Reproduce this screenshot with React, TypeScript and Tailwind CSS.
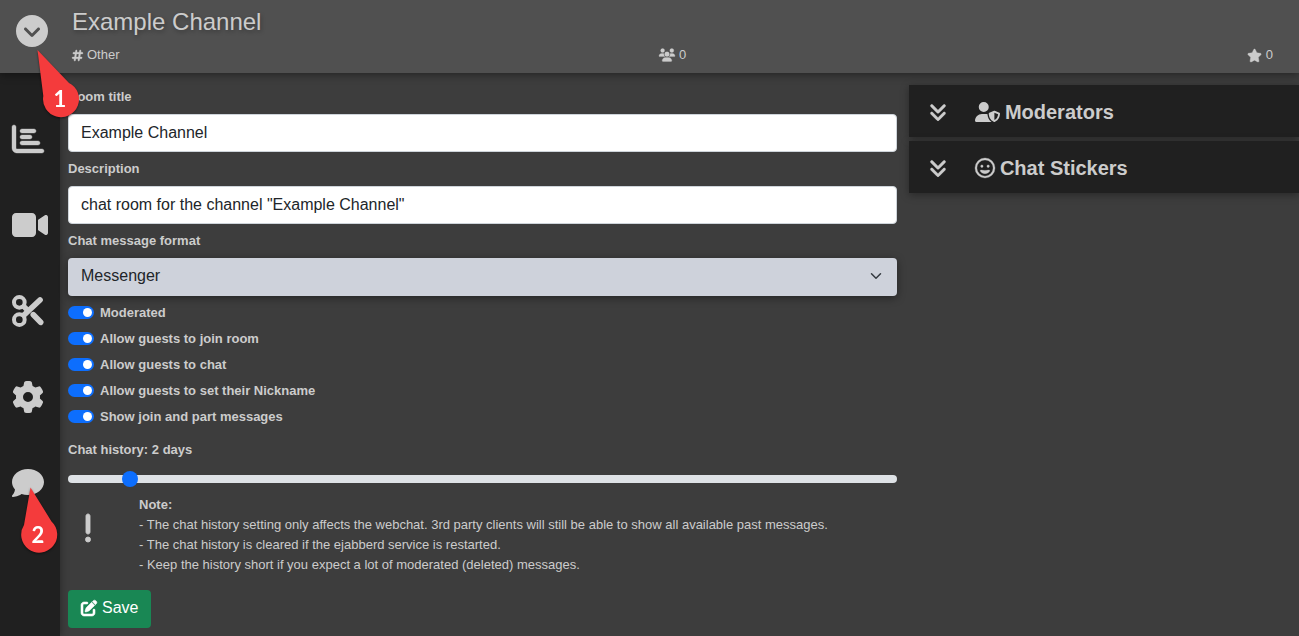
import { useState } from "react";
import type { ReactNode } from "react";
import {
  FaAnglesDown,
  FaChartBar,
  FaCircleChevronDown,
  FaComment,
  FaExclamation,
  FaGear,
  FaHashtag,
  FaPenToSquare,
  FaRegFaceGrin,
  FaStar,
  FaUserShield,
  FaUsers,
  FaVideo,
} from "react-icons/fa6";

function Scissors() {
  return (
    <svg viewBox="0 0 96 96" className="h-8 w-8" fill="none" stroke="currentColor" strokeLinecap="round">
      <circle cx="22" cy="22" r="16" strokeWidth="12" />
      <circle cx="22" cy="74" r="16" strokeWidth="12" />
      <path d="M36 60 84 15" strokeWidth="17" />
      <path d="M36 35 46 45" strokeWidth="16" />
      <path d="M64 59 86 82" strokeWidth="17" />
    </svg>
  );
}

const NAV = [
  { label: "Statistics", icon: <FaChartBar className="h-8 w-8 overflow-visible" strokeWidth={6} /> },
  { label: "Video", icon: <FaVideo className="h-8 w-9" /> },
  { label: "Clips", icon: <Scissors /> },
  { label: "Settings", icon: <FaGear className="h-8 w-8" /> },
  { label: "Chat", icon: <FaComment className="h-8 w-8" /> },
];

const OPTIONS = [
  "Moderated",
  "Allow guests to join room",
  "Allow guests to chat",
  "Allow guests to set their Nickname",
  "Show join and part messages",
];

function Marker({ n, path, x, y }: { n: number; path: string; x: number; y: number }) {
  return (
    <g>
      <path d={path} fill="#f43b3c" />
      <text
        x={x}
        y={y}
        textAnchor="middle"
        fill="#fff"
        fontSize="22"
        fontWeight="700"
        fontFamily="Lato, 'Open Sans', sans-serif"
      >
        {n}
      </text>
    </g>
  );
}

function Field({ id, label, children }: { id: string; label: string; children: ReactNode }) {
  return (
    <div className="flex flex-col gap-[7px]">
      <label htmlFor={id} className="text-[13px] leading-5 font-bold">
        {label}
      </label>
      {children}
    </div>
  );
}

function Toggle({ label }: { label: string }) {
  return (
    <label className="flex h-[26px] items-center gap-1.5 text-[13px] leading-5 font-bold">
      <input type="checkbox" defaultChecked className="peer sr-only" />
      <span className="flex h-[13px] w-[26px] items-center rounded-full bg-gray-400 px-0.5 peer-checked:justify-end peer-checked:bg-[#0d6efd]">
        <span className="h-[9px] w-[9px] rounded-full bg-white" />
      </span>
      <span className="pt-0.5">{label}</span>
    </label>
  );
}

function Panel({ icon, label }: { icon: ReactNode; label: string }) {
  return (
    <button
      type="button"
      className="flex h-[52px] w-full items-center bg-[#202020] pl-5 pt-0.5 text-left text-xl font-bold shadow-[0_2px_8px_rgba(0,0,0,0.35)]"
    >
      <FaAnglesDown className="mr-7 h-5 w-[18px] overflow-visible" strokeWidth={14} />
      <span className="flex items-center gap-[5px]">
        {icon}
        {label}
      </span>
    </button>
  );
}

export default function App() {
  const [days, setDays] = useState(2);
  return (
    <div
      className="relative flex min-h-screen flex-col overflow-hidden bg-[#3d3d3d] text-[#cccccc]"
      style={{ fontFamily: "'Liberation Sans', Arial, sans-serif" }}
    >
      <header className="z-10 flex h-[73px] items-start bg-[#505050] shadow-[0_2px_8px_rgba(0,0,0,0.4)]">
        <button type="button" aria-label="Open menu" className="ml-4 mt-[15px]">
          <FaCircleChevronDown className="h-8 w-8" />
        </button>
        <div className="ml-6 flex flex-1 flex-col gap-[9px] pr-[26px] pt-1.5">
          <h1 className="text-2xl leading-8 [text-shadow:1px_2px_4px_rgba(0,0,0,0.3)]">Example Channel</h1>
          <div className="grid grid-cols-3 text-[13px] leading-4">
            <span className="flex items-center gap-1">
              <FaHashtag className="h-[13px] w-[11px] overflow-visible" strokeWidth={16} />
              Other
            </span>
            <span className="flex items-center justify-center gap-1">
              <FaUsers className="h-[14px] w-4 overflow-visible" strokeWidth={12} />0
            </span>
            <span className="flex items-center justify-end gap-1">
              <FaStar className="h-[13px] w-[15px] overflow-visible" strokeWidth={16} />0
            </span>
          </div>
        </div>
      </header>

      <div className="flex flex-1">
        <nav className="flex w-[60px] shrink-0 flex-col gap-[54px] bg-[#202020] pl-3 pt-[50px] shadow-[0_0_8px_rgba(0,0,0,0.4)]">
          {NAV.map((item) => (
            <a key={item.label} href="#" aria-label={item.label} className="block h-8">
              {item.icon}
            </a>
          ))}
        </nav>

        <main className="grid flex-1 grid-cols-[17fr_8fr] items-start gap-3 pl-2">
          <form className="flex flex-col pt-3.5" onSubmit={(e) => e.preventDefault()}>
            <div className="flex flex-col gap-[7px]">
              <Field id="title" label="Room title">
                <input
                  id="title"
                  defaultValue="Example Channel"
                  className="h-[38px] rounded border border-[#ced4da] bg-white px-3 text-base text-[#212529]"
                />
              </Field>
              <Field id="description" label="Description">
                <input
                  id="description"
                  defaultValue={'chat room for the channel "Example Channel"'}
                  className="h-[38px] rounded border border-[#ced4da] bg-white px-3 text-base text-[#212529]"
                />
              </Field>
              <Field id="format" label="Chat message format">
                <div className="relative">
                  <select
                    id="format"
                    className="h-[38px] w-full appearance-none rounded bg-[#ced2db] px-[13px] pb-0.5 text-base text-[#212529] shadow-[0_2px_8px_rgba(0,0,0,0.4)]"
                  >
                    <option>Messenger</option>
                  </select>
                  <svg
                    viewBox="0 0 16 16"
                    className="pointer-events-none absolute right-[15px] top-3 h-3 w-3"
                    fill="none"
                    stroke="#343a40"
                    strokeWidth="2"
                    strokeLinecap="round"
                    strokeLinejoin="round"
                  >
                    <path d="m2 5 6 6 6-6" />
                  </svg>
                </div>
              </Field>
            </div>

            <div className="mt-[3px] flex flex-col">
              {OPTIONS.map((o) => (
                <Toggle key={o} label={o} />
              ))}
            </div>

            <label htmlFor="history" className="mt-[11px] text-[13px] leading-5 font-bold">
              Chat history: {days} days
            </label>
            <input
              id="history"
              type="range"
              min={0}
              max={30}
              value={days}
              onChange={(e) => setDays(Number(e.target.value))}
              className="mt-[7px] h-6 w-full appearance-none bg-transparent [&::-webkit-slider-runnable-track]:h-2 [&::-webkit-slider-runnable-track]:rounded-full [&::-webkit-slider-runnable-track]:bg-[#dee2e6] [&::-webkit-slider-thumb]:-mt-1 [&::-webkit-slider-thumb]:h-4 [&::-webkit-slider-thumb]:w-4 [&::-webkit-slider-thumb]:appearance-none [&::-webkit-slider-thumb]:rounded-full [&::-webkit-slider-thumb]:bg-[#0d6efd]"
            />

            <div className="mt-1 flex text-[13px] leading-5">
              <FaExclamation className="ml-2.5 mr-[41px] mt-[17px] h-8 w-5 shrink-0" strokeWidth={14} />
              <div>
                <p className="font-bold">Note:</p>
                <p>- The chat history setting only affects the webchat. 3rd party clients will still be able to show all available past messages.</p>
                <p>- The chat history is cleared if the ejabberd service is restarted.</p>
                <p>- Keep the history short if you expect a lot of moderated (deleted) messages.</p>
              </div>
            </div>

            <button
              type="submit"
              className="mt-[15px] flex h-[38px] items-center gap-[5px] self-start rounded bg-[#198754] px-[13px] pb-0.5 text-base text-white"
            >
              <FaPenToSquare className="h-4 w-4 overflow-visible" strokeWidth={18} />
              Save
            </button>
          </form>

          <aside className="flex flex-col gap-1 pt-3">
            <Panel icon={<FaUserShield className="h-5 w-[25px]" />} label="Moderators" />
            <Panel icon={<FaRegFaceGrin className="h-5 w-5 overflow-visible" strokeWidth={8} />} label="Chat Stickers" />
          </aside>
        </main>
      </div>

      <svg
        className="pointer-events-none absolute left-0 top-0 z-20 drop-shadow-[0_1px_1px_rgba(0,0,0,0.5)]"
        width="100"
        height="570"
        viewBox="0 0 100 570"
      >
        <Marker n={1} x={60} y={107} path="M37.5 50 L43.3 96 A18 18 0 1 0 69 83 Z" />
        <Marker n={2} x={38} y={543} path="M30.5 487.5 L24 525 A18 18 0 1 0 51.5 521.5 Z" />
      </svg>
    </div>
  );
}
